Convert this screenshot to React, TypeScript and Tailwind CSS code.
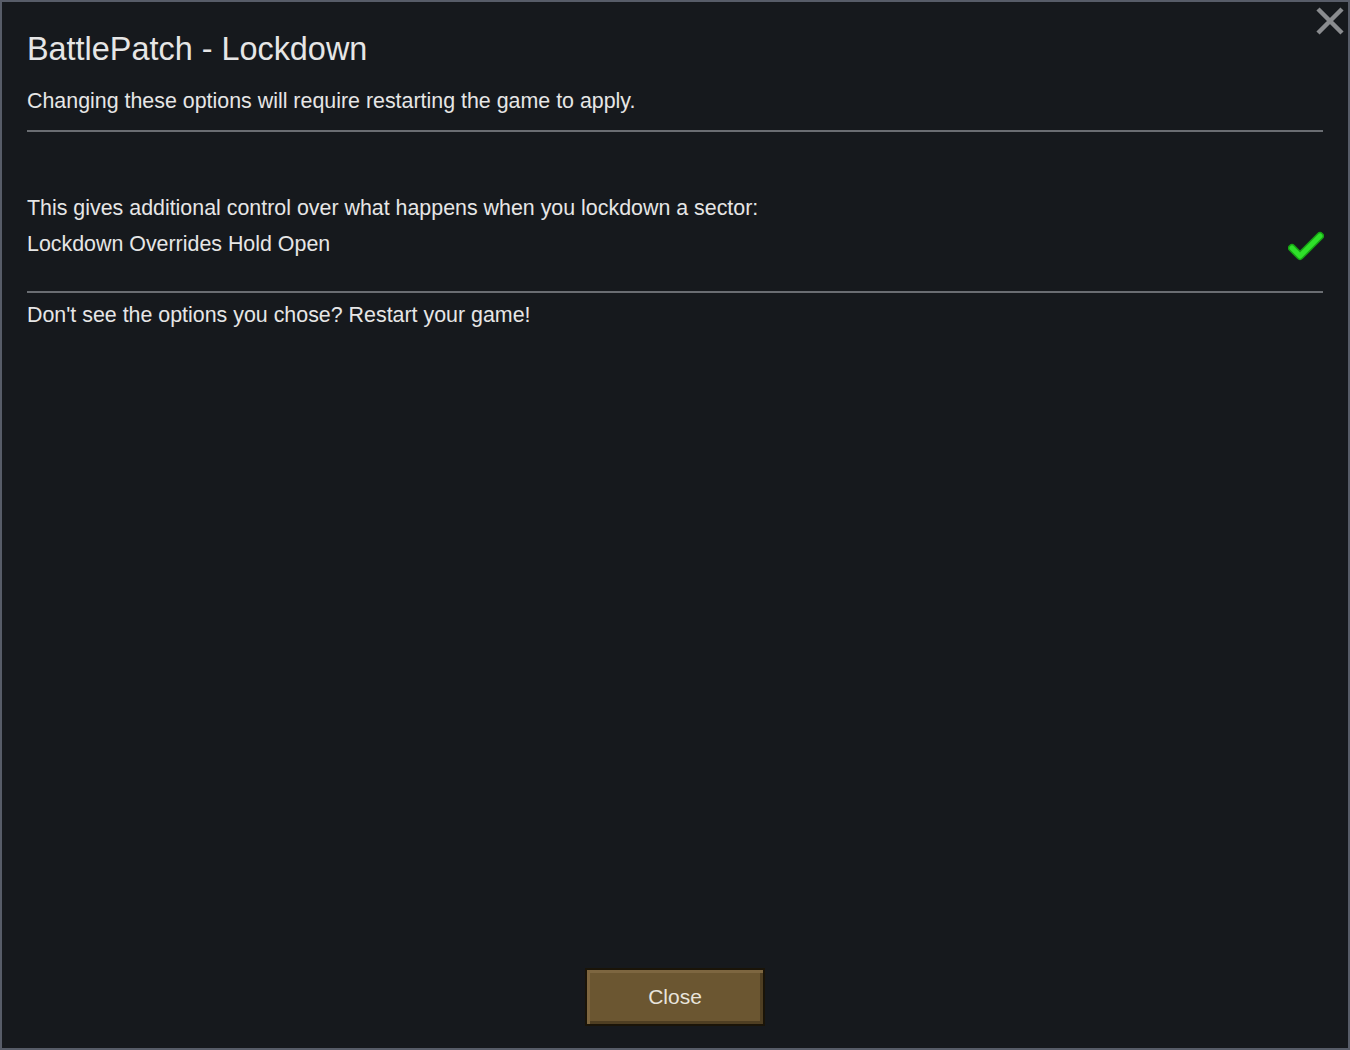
import { useState } from 'react';

function CheckMark() {
  return (
    <svg width="36" height="32" viewBox="0 0 36 32" className="block">
      <path d="M4 18 L12 26 L32 6" fill="none" stroke="#16a314" strokeWidth="8" strokeLinecap="round" strokeLinejoin="round" />
      <path d="M4 18 L12 26 L32 6" fill="none" stroke="#2fe02a" strokeWidth="5" strokeLinecap="round" strokeLinejoin="round" />
    </svg>
  );
}

export default function App() {
  const [override, setOverride] = useState(true);

  return (
    <div
      className="relative w-[1350px] h-[1050px] bg-[#16191d] border-2 border-[#575c68] flex flex-col text-[#e6e6e6]"
      style={{ fontFamily: '"Liberation Sans", Arial, sans-serif' }}
    >
      <button className="absolute top-[3px] right-[2px] w-[32px] h-[32px] flex items-center justify-center">
        <svg width="30" height="30" viewBox="0 0 30 30">
          <path d="M3 3 L27 27 M27 3 L3 27" stroke="#8a8c8f" strokeWidth="4.5" />
        </svg>
      </button>

      <div className="px-[25px] flex flex-col">
        <h1 className="text-[32.4px] leading-[38px] mt-[28px]">BattlePatch - Lockdown</h1>
        <p className="text-[21.4px] leading-[26px] mt-[20px]">Changing these options will require restarting the game to apply.</p>
        <div className="h-[2px] bg-[#6a6d72] mt-[16px]" />

        <p className="text-[21.4px] leading-[26px] mt-[63px]">This gives additional control over what happens when you lockdown a sector:</p>
        <div className="flex items-center justify-between h-[36px] mt-[5px]">
          <span className="text-[21.4px] leading-[26px]">Lockdown Overrides Hold Open</span>
          <button onClick={() => setOverride(!override)} className="w-[36px] h-[32px] mt-[4px] mr-[-1px]">
            {override && <CheckMark />}
          </button>
        </div>
        <div className="h-[2px] bg-[#6a6d72] mt-[29px]" />
        <p className="text-[21.4px] leading-[26px] mt-[9px]">Don't see the options you chose? Restart your game!</p>
      </div>

      <div className="flex-1" />

      <div className="flex justify-center pb-[22px]">
        <button className="w-[180px] h-[58px] bg-[#6b5631] border-2 border-[#1a1408] text-[21px] text-[#e8e4dc] shadow-[inset_3px_3px_0_#7d6640,inset_-3px_-3px_0_#4e3e22]">
          Close
        </button>
      </div>
    </div>
  );
}
